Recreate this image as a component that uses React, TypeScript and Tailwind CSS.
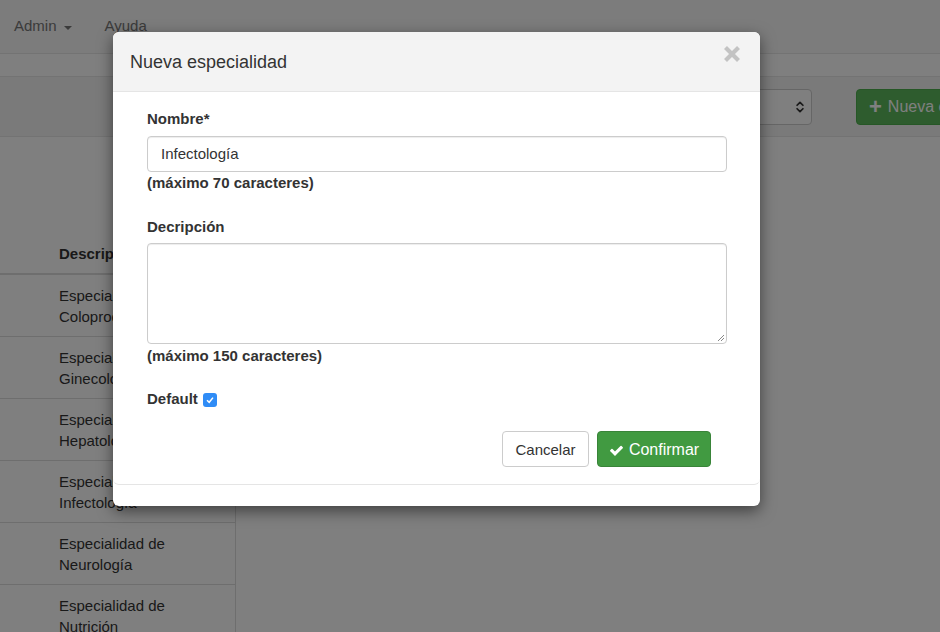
import { ChevronsUpDown } from "lucide-react";

const rows = [
  ["Especialidad de", "Coloproctología"],
  ["Especialidad de", "Ginecología"],
  ["Especialidad de", "Hepatología"],
  ["Especialidad de", "Infectología"],
  ["Especialidad de", "Neurología"],
  ["Especialidad de", "Nutrición"],
];

function CheckIcon({ className }: { className?: string }) {
  return (
    <svg viewBox="0 0 1792 1792" className={className} fill="currentColor">
      <path d="M1671 566q0 40-28 68l-724 724-136 136q-28 28-68 28t-68-28l-136-136-362-362q-28-28-28-68t28-68l136-136q28-28 68-28t68 28l294 295 656-657q28-28 68-28t68 28l136 136q28 28 28 68z" />
    </svg>
  );
}

function Page() {
  return (
    <div className="w-[940px]">
      {/* Navbar */}
      <div className="flex h-[54px] items-center border-b border-[#e7e7e7] bg-[#f8f8f8] text-[15px] text-[#777]">
        <span className="ml-[14px] flex items-center gap-[7px]">
          Admin
          <span className="mt-[2px] h-0 w-0 border-x-[4px] border-t-[4px] border-x-transparent border-t-[#777]" />
        </span>
        <span className="ml-[33px]">Ayuda</span>
      </div>

      {/* Toolbar band */}
      <div className="mt-[22px] flex h-[61px] items-center border-y border-[#e7e7e7] bg-[#f5f5f5]">
        <div className="ml-[560px] flex h-[36px] w-[252px] shrink-0 items-center justify-end rounded border border-[#ccc] bg-white pr-[4px] text-[#333]">
          <ChevronsUpDown size={14} strokeWidth={3} />
        </div>
        <div className="ml-[44px] flex h-[36px] shrink-0 items-center gap-[6px] rounded border border-[#4cae4c] bg-[#5cb85c] px-[12px] text-[16px] text-white">
          <span className="text-[22px] font-bold leading-none">+</span>
          Nueva especialidad
        </div>
      </div>

      {/* Table */}
      <div className="mt-[95px] w-[236px] border-r border-[#ddd] text-[15px] text-[#333]">
        <div className="flex h-[43px] items-center border-b-2 border-[#ddd] pl-[59px] pt-[4px] font-bold">
          Descripción
        </div>
        {rows.map(([a, b]) => (
          <div
            key={b}
            className="flex h-[62px] flex-col justify-center border-b border-[#ddd] pl-[59px] leading-[21px]"
          >
            <span>{a}</span>
            <span>{b}</span>
          </div>
        ))}
      </div>
    </div>
  );
}

function Modal() {
  return (
    <div className="absolute left-[113px] top-[32px] w-[647px] rounded-md bg-white shadow-[0_5px_15px_rgba(0,0,0,0.5)]">
      <div className="flex h-[60px] items-center justify-between rounded-t-md border-b border-[#e5e5e5] bg-[#f3f3f3] pl-[17px] pr-[19px]">
        <span className="pt-[2px] text-[18px] text-[#333]">Nueva especialidad</span>
        <svg viewBox="0 0 18 18" className="-mt-[16px] h-[18px] w-[18px]">
          <path
            d="M2.5 2.5 L15.5 15.5 M15.5 2.5 L2.5 15.5"
            stroke="#c3c3c3"
            strokeWidth="4.2"
          />
        </svg>
      </div>

      <div className="rounded-b-md border-b border-[#e5e5e5] pb-[17px] pl-[34px] pr-[33px] pt-[17px] text-[15px] text-[#333]">
        <div className="font-bold leading-[20px]">Nombre*</div>
        <div className="mt-[7px] flex h-[36px] items-center rounded border border-[#ccc] px-[13px] shadow-[inset_0_1px_1px_rgba(0,0,0,0.075)]">
          Infectología
        </div>
        <div className="mt-[1px] font-bold leading-[20px]">(máximo 70 caracteres)</div>

        <div className="mt-[24px] font-bold leading-[20px]">Decripción</div>
        <div className="relative mt-[6px] h-[101px] rounded border border-[#ccc] shadow-[inset_0_1px_1px_rgba(0,0,0,0.075)]">
          <svg viewBox="0 0 8 8" className="absolute bottom-[1px] right-[1px] h-[8px] w-[8px]">
            <path d="M7 1 L1 7 M7 4 L4 7" stroke="#888" strokeWidth="1" />
          </svg>
        </div>
        <div className="mt-[2px] font-bold leading-[20px]">(máximo 150 caracteres)</div>

        <div className="mt-[23px] flex items-center gap-[5px] leading-[20px]">
          <span className="font-bold">Default</span>
          <span className="mt-[2px] flex h-[14px] w-[14px] items-center justify-center rounded-[3px] bg-[#2f8cf6]">
            <svg viewBox="0 0 10 10" className="h-[10px] w-[10px]">
              <path d="M2 5.2 L4.2 7.3 L8 2.6" fill="none" stroke="white" strokeWidth="1.5" />
            </svg>
          </span>
        </div>

        <div className="mt-[22px] flex justify-end gap-[8px] pr-[16px]">
          <button className="h-[36px] w-[87px] rounded border border-[#ccc] bg-white pt-[2px] text-[15px] text-[#333]">
            Cancelar
          </button>
          <button className="flex h-[36px] w-[114px] items-center justify-center gap-[5px] rounded border border-[#398439] bg-[#419a41] pt-[2px] text-[16px] text-white">
            <CheckIcon className="h-[15px] w-[15px]" />
            Confirmar
          </button>
        </div>
      </div>
      <div className="h-[21px]" />
    </div>
  );
}

export default function App() {
  return (
    <div
      className="relative h-[632px] w-[940px] overflow-hidden bg-white"
      style={{ fontFamily: '"Helvetica Neue", "Liberation Sans", Arial, sans-serif' }}
    >
      <Page />
      <div className="absolute inset-0 bg-black/50" />
      <Modal />
    </div>
  );
}
